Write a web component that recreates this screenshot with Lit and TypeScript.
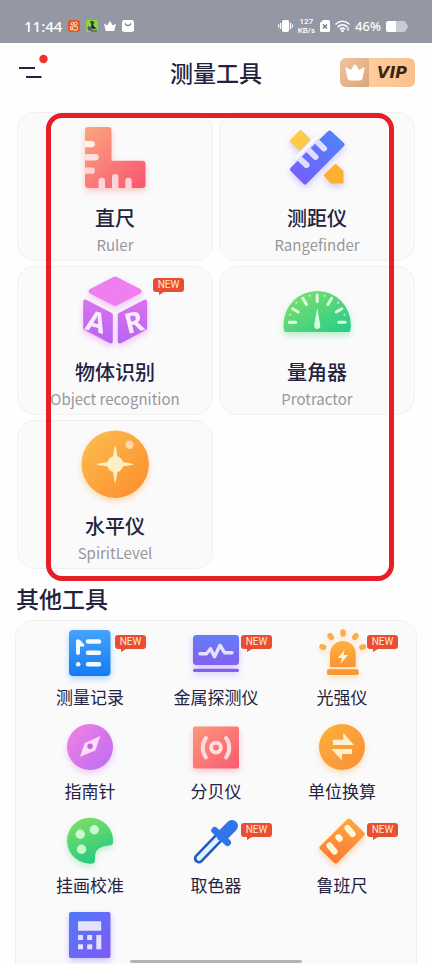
import { LitElement, html, svg, css, nothing, SVGTemplateResult } from "lit";
import { customElement, property } from "lit/decorators.js";

interface Tool {
  name: string;
  sub?: string;
  icon: string;
  isNew?: boolean;
  hideLabel?: boolean;
}

const mainTools: Tool[] = [
  { name: "直尺", sub: "Ruler", icon: "ruler" },
  { name: "测距仪", sub: "Rangefinder", icon: "range" },
  { name: "物体识别", sub: "Object recognition", icon: "ar", isNew: true },
  { name: "量角器", sub: "Protractor", icon: "protractor" },
  { name: "水平仪", sub: "SpiritLevel", icon: "spirit" },
];

const otherTools: Tool[] = [
  { name: "测量记录", icon: "records", isNew: true },
  { name: "金属探测仪", icon: "metal", isNew: true },
  { name: "光强仪", icon: "light", isNew: true },
  { name: "指南针", icon: "compass" },
  { name: "分贝仪", icon: "decibel" },
  { name: "单位换算", icon: "convert" },
  { name: "挂画校准", icon: "palette" },
  { name: "取色器", icon: "dropper", isNew: true },
  { name: "鲁班尺", icon: "luban", isNew: true },
  { name: "计算器", icon: "calculator", hideLabel: true },
];

const gradient = (from: string, to: string, x1 = 0, y1 = 0, x2 = 1, y2 = 1) => svg`
  <defs><linearGradient id="g" x1=${x1} y1=${y1} x2=${x2} y2=${y2}>
    <stop offset="0" stop-color=${from}/><stop offset="1" stop-color=${to}/>
  </linearGradient></defs>`;

const icons: Record<string, { size: number; glow: string; art: SVGTemplateResult }> = {
  ruler: {
    size: 68,
    glow: "#ff8a7a70",
    art: svg`${gradient("#fba57f", "#fa5570")}
      <path fill="url(#g)" d="M7 5H27.500a3 3 0 0 1 3 3V38.700H61.500a3 3 0 0 1 3 3V63a3 3 0 0 1-3 3H7a3 3 0 0 1-3-3V8a3 3 0 0 1 3-3z"/>
      <g fill="#ffd3dc">
        <path fill="#fff3ee" d="M4 19h6.800a3.100 3.100 0 0 1 0 6.200H4z"/>
        <path fill="#ffe0df" d="M4 32h10.500a3.200 3.200 0 0 1 0 6.400H4z"/>
        <path d="M4 45.600h6.800a3.100 3.100 0 0 1 0 6.200H4z"/>
        <path d="M17.600 66V59a3.200 3.200 0 0 1 6.400 0v7z"/>
        <path d="M31 66V55.300a3.200 3.200 0 0 1 6.400 0V66z"/>
        <path d="M44.300 66V59a3.200 3.200 0 0 1 6.400 0v7z"/>
      </g>`,
  },
  range: {
    size: 68,
    glow: "#8b7cff60",
    art: svg`${gradient("#7a5cfb", "#4a86f7", 0, 1, 1, 0)}
      <path fill="#fdcb45" stroke="#fdcb45" stroke-width="3" stroke-linejoin="round" d="M17.500 9.700 25.700 17.500 16.700 27.200 8.300 19z"/>
      <path fill="url(#g)" stroke="url(#g)" stroke-width="4" stroke-linejoin="round" d="M46.600 10.500 59.500 22.500 22 60.500 9 47.300z"/>
      <path fill="none" stroke="#e4dcff" stroke-width="6" stroke-linecap="round" d="M17 37l6.500 6M26 28.500l6.500 6.500M34.500 20l6.500 6.500"/>
      <path fill="#fafafb" d="M11 35.500 33.500 13l2.500 2.500L13.500 38z"/>
      <path fill="#fdb02e" stroke="#fdb02e" stroke-width="2" stroke-linejoin="round" d="M52.600 43 59.500 49.500V60.500H48.500L41.800 53.300z"/>`,
  },
  ar: {
    size: 68,
    glow: "#e878f070",
    art: svg`${gradient("#d872ee", "#b765f2", 0, 0, 0, 1)}
      <path fill="#ee7fee" stroke="#ee7fee" stroke-width="5" stroke-linejoin="round" d="M34.200 3 58 15.300 34.200 27.500 10.200 15.300z"/>
      <path fill="url(#g)" stroke="url(#g)" stroke-width="4" stroke-linejoin="round" d="M4.200 25.500 29.800 38.700V65.500L4.200 52z"/>
      <path fill="url(#g)" stroke="url(#g)" stroke-width="4" stroke-linejoin="round" d="M64.200 25.500 38.800 38.700V65.500L64.200 52z"/>
      <g class="cube" fill="#fdeafe" text-anchor="middle">
        <text x="0" y="10" transform="translate(15 46) rotate(14)">A</text>
        <text x="0" y="10" transform="translate(53 46) rotate(-14)">R</text>
      </g>`,
  },
  protractor: {
    size: 68,
    glow: "#6fe08a80",
    art: svg`${gradient("#86e06a", "#25cb8c")}
      <path fill="url(#g)" d="M2.200 56C1 56 .600 52 .600 48.600a33.600 33.600 0 0 1 67.200 0C67.800 52 67.400 56 66.200 56z"/>
      <g stroke="#d9ffdf" stroke-width="3" stroke-linecap="round">
        <path d="M34.200 19V25.500M6.200 46.200h6.500M55.700 46.200h6.500M9.600 32.700l5.600 3.300M58.800 32.700l-5.600 3.300M19.800 22.200l3.700 6.300M48.600 22.200l-3.700 6.300"/>
      </g>
      <g fill="#c9f7cf"><circle cx="26.900" cy="19.700" r="1"/><circle cx="41.500" cy="19.700" r="1"/><circle cx="13.300" cy="26.700" r="1"/><circle cx="55.100" cy="26.700" r="1"/><circle cx="6.900" cy="38.700" r="1"/><circle cx="61.500" cy="38.700" r="1"/></g>
      <path fill="#d9ffdf" d="M34.200 31.500 37.200 49a3.100 3.100 0 1 1-6 0z"/>`,
  },
  spirit: {
    size: 68,
    glow: "#ffb04a70",
    art: svg`${gradient("#fdc04f", "#fd8a2c")}
      <circle cx="34.200" cy="34.200" r="33.700" fill="url(#g)"/>
      <circle cx="34.200" cy="34.200" r="8.200" fill="#fff0c4"/>
      <path fill="#fff0c4" d="M34.200 15.500C35.500 18 36 24 37 31.400 44 32.400 50.500 33 53 34.200 50.500 35.400 44 36 37 37 36 44 35.500 50.500 34.200 53 33 50.500 32.400 44 31.400 37 24 36 18 35.400 15.500 34.200 18 33 24 32.400 31.400 31.400 32.400 24 33 18 34.200 15.500z"/>
      <circle cx="48.500" cy="14.700" r="4.200" fill="#ffd9a8"/>`,
  },
  records: {
    size: 46,
    glow: "#3d97ff60",
    art: svg`${gradient("#45a3fb", "#147cf4", 0, 0, 0, 1)}
      <rect x="2" y="0" width="41.500" height="46" rx="4" fill="url(#g)"/>
      <path stroke="#f3f9ff" stroke-width="4.500" stroke-linecap="round" d="M21 11.500h11M21 22.800h11M21 34.300h11"/>
      <path fill="#f3f9ff" d="M9 11.500c0-2.500 2.500-3 4-1.500l4.200 4.500v2h-4.200V23c0 2.600-4 2.600-4 0z"/>
      <circle cx="11.200" cy="34.300" r="2.300" fill="#f3f9ff"/>`,
  },
  metal: {
    size: 46,
    glow: "#8a70ff60",
    art: svg`${gradient("#627df8", "#8460ee", 0, 0, 0, 1)}
      <rect x="0" y="5" width="46" height="30" rx="3.500" fill="url(#g)"/>
      <rect x="0" y="38.700" width="46" height="3.300" rx="1.500" fill="#8160ea"/>
      <path fill="none" stroke="#e6e2ff" stroke-width="3.400" stroke-linecap="round" stroke-linejoin="round" d="M7 23.700h6.500l4-5 4 8 5.500-11.500 4.500 7.500H39"/>`,
  },
  light: {
    size: 46,
    glow: "#ffb04a60",
    art: svg`${gradient("#fcb242", "#fb9433", 0, 0, 0, 1)}
      <path fill="url(#g)" d="M11 37V23.800a12.900 12.900 0 0 1 25.800 0V37z"/>
      <rect x="8" y="39.300" width="31.700" height="5.700" rx="1.800" fill="#fb9733"/>
      <path stroke="#fbae43" stroke-width="5.400" stroke-linecap="round" d="M24 2v2M11 5.700l1.300 1.800M37 5.700l-1.300 1.800M3 16.800l1.600.600M44.500 16.800l-1.600.600"/>
      <path fill="#fff6dc" d="M25.500 20 19 28h4l-1.500 6 7.500-9h-4.300z"/>`,
  },
  compass: {
    size: 46,
    glow: "#dd7af060",
    art: svg`${gradient("#f083e2", "#bd6bf3")}
      <circle cx="23" cy="23" r="23" fill="url(#g)"/>
      <path fill="#fbdcf9" d="M33.300 12 28.400 26.400 13 32.800 17.800 19z"/><circle cx="23" cy="22.300" r="2.700" fill="#c565dc"/>`,
  },
  decibel: {
    size: 46,
    glow: "#ff7a7a60",
    art: svg`${gradient("#fc987a", "#fb5a72")}
      <rect x="0" y="2.500" width="46" height="42" rx="2" fill="url(#g)"/>
      <circle cx="23" cy="23.600" r="4.900" fill="none" stroke="#ffe1e1" stroke-width="3.800"/>
      <path fill="none" stroke="#ffd9dc" stroke-width="4" stroke-linecap="round" d="M13 14c-4.300 5.500-4.300 14 0 19.400M33 14c4.300 5.500 4.300 14 0 19.400"/>`,
  },
  convert: {
    size: 46,
    glow: "#ffb04a60",
    art: svg`${gradient("#fbb03d", "#fb8f34")}
      <circle cx="23" cy="23" r="23" fill="url(#g)"/>
      <path fill="#fff1cf" d="M14 15.700H24.300V9L35 21H14zM33 25H12.300L23 36.500V30H33z"/>`,
  },
  palette: {
    size: 46,
    glow: "#5fdc8060",
    art: svg`${gradient("#7ede66", "#22c880", 0.3, 0, 0.7, 1)}
      <path fill="url(#g)" d="M25.500 45.500A23 23 0 1 1 46 24.500c0 2-1.500 2.700-4 3C31 28.700 28 32 28 40.500c0 3-.300 4.700-2.500 5z"/>
      <g fill="#cbf8cf"><circle cx="13.300" cy="16.300" r="4.700"/><circle cx="27.300" cy="11.700" r="4.700"/><circle cx="14.500" cy="31.300" r="4.700"/></g>`,
  },
  dropper: {
    size: 46,
    glow: "#00000000",
    art: svg`
      <path stroke="#1f5bb8" stroke-width="10" stroke-linecap="round" d="M5.800 40.500 27 18.500"/>
      <path stroke="#e2efff" stroke-width="5" stroke-linecap="round" d="M6 40.300 26 19.500"/>
      <path stroke="#2f74e8" stroke-width="12" stroke-linecap="round" d="M29.500 17.500 39 8"/>
      <path stroke="#2f74e8" stroke-width="7" stroke-linecap="round" d="M21.800 12.500 34.500 24.500"/>`,
  },
  luban: {
    size: 46,
    glow: "#ff9a4a70",
    art: svg`${gradient("#fba63d", "#fb7a35", 0.6, 0, 0.5, 1)}
      <path fill="url(#g)" stroke="url(#g)" stroke-width="4" stroke-linejoin="round" d="M30 2.500 43.700 16 16.700 43.500 2.500 29.700z"/>
      <path stroke="#fff5d8" stroke-width="6.200" stroke-linecap="round" d="M10.500 27.500l5 6M19.500 19.200l1.200 1.400M28.500 10l5 6"/>`,
  },
  calculator: {
    size: 46,
    glow: "#7a6cff60",
    art: svg`${gradient("#4f7af8", "#8159f6")}
      <rect x="2" y="0" width="41.500" height="46" rx="2" fill="url(#g)"/>
      <g fill="#e3e3ff"><rect x="11" y="9.300" width="23.200" height="9.400" rx=".6"/><rect x="11" y="23" width="5" height="5"/><rect x="20.200" y="23" width="5" height="5"/><rect x="11" y="32.300" width="5" height="5"/><rect x="20.200" y="32.300" width="5" height="5"/><rect x="29.300" y="23" width="5" height="14.300"/></g>`,
  },
};

@customElement("tool-icon")
export class ToolIcon extends LitElement {
  @property() name = "";

  static styles = css`
    :host { display: block; }
    svg { display: block; overflow: visible; }
    .cube { font: 700 28px "Noto Sans", sans-serif; }
  `;

  render() {
    const icon = icons[this.name];
    return html`<svg aria-hidden="true" width=${icon.size} height=${icon.size}
      viewBox="0 0 ${icon.size} ${icon.size}" fill="none"
      style="filter: drop-shadow(0 3px 3px ${icon.glow})">${icon.art}</svg>`;
  }
}

@customElement("new-badge")
export class NewBadge extends LitElement {
  static styles = css`
    :host {
      display: block;
      width: 31px;
      height: 14px;
      border-radius: 3px;
      background: #e84e2f;
      color: #ffe9dc;
      font: 10px/14px Roboto, sans-serif;
      text-align: center;
    }
    :host::after {
      content: "";
      position: absolute;
      left: 6px;
      top: 100%;
      border-top: 3px solid #e84e2f;
      border-right: 5px solid transparent;
    }
  `;

  render() {
    return html`NEW`;
  }
}

@customElement("status-bar")
export class StatusBar extends LitElement {
  static styles = css`
    :host {
      display: flex;
      align-items: center;
      justify-content: space-between;
      flex: none;
      height: 43px;
      box-sizing: border-box;
      padding: 9px 24px 0;
      background: #9497a4;
      color: #fff;
      font-family: "Noto Sans", sans-serif;
    }
    .side { display: flex; align-items: center; gap: 6px; }
    .time { font-size: 15px; font-weight: 500; line-height: 20px; }
    .rate {
      display: grid;
      font: 500 8px/9px Roboto, sans-serif;
      text-align: center;
    }
    .level { font-size: 13px; font-weight: 500; line-height: 20px; }
    .right { gap: 5px; }
    svg { display: block; }
  `;

  render() {
    return html`
      <div class="side">
        <span class="time">11:44</span>
        <svg width="12" height="12" viewBox="0 0 12 12" fill="none" stroke="#ffe6da">
          <rect width="12" height="12" rx="2.500" fill="#e8561c" stroke="none"/>
          <circle cx="4.300" cy="3.800" r="1.400"/><circle cx="7.600" cy="3.600" r="1.600"/>
          <rect x="4.600" y="6.400" width="4.800" height="3.600" rx="1"/><path d="M4.600 7.600 2.500 6.800v3l2.100-.6"/>
        </svg>
        <svg width="12" height="12" viewBox="0 0 12 12">
          <rect width="12" height="12" rx="2" fill="#84d941"/>
          <path fill="#1d2a2e" d="M4 1.500 7 1l1.500 2L7 4.500 8.500 7 11 8.500 7 9 5 7.500 5.500 4z"/>
          <path fill="#7b3fa0" d="M2 6l3 1 1.500 3L3 11 1.500 8.500z"/><path fill="#d9402e" d="M6 2.500h2v1H6z"/>
          <path fill="#26352c" d="M5 10.500h6v1H5z"/>
        </svg>
        <svg width="12" height="12" viewBox="0 0 12 12" fill="#fff">
          <path d="M0 3.500 3.200 5.500 6 1l2.800 4.500L12 3.500 10.300 11H1.700z"/>
        </svg>
        <svg width="12" height="12" viewBox="0 0 12 12">
          <rect width="12" height="12" rx="2.500" fill="#fff"/>
          <path fill="none" stroke="#70737e" stroke-width="1.200" stroke-linecap="round" d="M3.300 3.800c1 2.300 4.400 2.300 5.400 0"/>
        </svg>
      </div>
      <div class="side right">
        <svg width="15" height="14" viewBox="0 0 15 14" fill="#fff">
          <rect x="4" y="1" width="7" height="12" rx="1.800"/>
          <path d="M1.800 4h1.400v6H1.800zM11.800 4h1.400v6h-1.400zM0 5.500h1v3H0zM14 5.500h1v3h-1z"/>
        </svg>
        <span class="rate"><span>127</span><span>KB/s</span></span>
        <svg width="10" height="12" viewBox="0 0 10 12">
          <path fill="#fff" d="M3 0h5.500A1.500 1.500 0 0 1 10 1.500v9A1.500 1.500 0 0 1 8.500 12h-7A1.500 1.500 0 0 1 0 10.500V3z"/>
          <path stroke="#6e717c" stroke-width="1.200" d="M3 4.500l4 4M7 4.500l-4 4"/>
        </svg>
        <svg width="15" height="12" viewBox="0 0 15 12" fill="none" stroke="#fff" stroke-width="1.600" stroke-linecap="round">
          <path d="M1 4c3.800-3.600 9.200-3.600 13 0M3.200 6.600c2.500-2.300 6.100-2.300 8.600 0M5.400 9c1.300-1.100 2.900-1.100 4.200 0"/>
          <circle cx="7.500" cy="10.800" r=".6" fill="#fff"/><path stroke-width="1.200" d="M13 7.500v3"/>
        </svg>
        <span class="level">46%</span>
        <svg width="22" height="11" viewBox="0 0 22 11">
          <rect width="20" height="11" rx="2.500" fill="#c9cbd2"/>
          <path fill="#fff" d="M2.500 0H10v11H2.500A2.500 2.500 0 0 1 0 8.500v-6A2.500 2.500 0 0 1 2.500 0z"/>
          <path fill="#c9cbd2" d="M20 2.500c2.300 1 2.300 5 0 6z"/>
        </svg>
      </div>
    `;
  }
}

@customElement("app-root")
export class AppRoot extends LitElement {
  static styles = css`
    :host {
      display: flex;
      flex-direction: column;
      position: relative;
      height: 100vh;
      overflow: hidden;
      background: #fefefe;
      color: #23233f;
      font-family: "Noto Sans CJK SC", sans-serif;
    }
    button {
      appearance: none;
      margin: 0;
      border: 0;
      padding: 0;
      background: none;
      color: inherit;
      font: inherit;
      cursor: pointer;
    }
    .top {
      display: grid;
      grid-template-columns: 1fr auto 1fr;
      align-items: center;
      flex: none;
      height: 58px;
      padding: 0 17px;
    }
    .top h1, .heading {
      margin: 0;
      font-size: 23px;
      font-weight: 500;
      line-height: 32px;
    }
    .menu { justify-self: start; padding-left: 2px; }
    .menu svg { display: block; overflow: visible; }
    .vip {
      justify-self: end;
      display: flex;
      align-items: center;
      width: 75px;
      height: 29px;
      overflow: hidden;
      border-radius: 6px;
      background: linear-gradient(90deg, #fdd6ab, #fbc08b);
      color: #3a2413;
      font: italic 700 16px/29px "DejaVu Sans", sans-serif;
    }
    .crown {
      display: grid;
      place-items: center;
      width: 29px;
      height: 29px;
      margin-right: 8px;
      background: linear-gradient(135deg, #f3c59a, #dba67c);
    }
    .content {
      flex: 1;
      min-height: 0;
      overflow-y: auto;
      scrollbar-width: none;
      padding-top: 11px;
    }
    .cards {
      position: relative;
      display: grid;
      grid-template-columns: 1fr 1fr;
      gap: 5px 6px;
      padding: 0 17px;
    }
    .card {
      display: flex;
      flex-direction: column;
      align-items: center;
      box-sizing: border-box;
      height: 149px;
      padding-top: 9px;
      border: 1px solid #f1f1f2;
      border-radius: 18px;
      background: #fafafb;
    }
    .art { position: relative; }
    .badge { position: absolute; left: 48px; top: 5px; }
    .card .badge { left: 72px; top: 2px; }
    .title {
      margin-top: 14px;
      font-size: 20px;
      font-weight: 500;
      line-height: 28px;
    }
    .sub {
      color: #97979c;
      font-size: 15px;
      line-height: 26px;
      white-space: nowrap;
    }
    .mark {
      position: absolute;
      inset: 1px 38px -12px 46px;
      border: 5px solid #e61f26;
      border-radius: 16px;
      pointer-events: none;
    }
    .heading { padding: 13px 16px 6px; }
    .panel {
      display: grid;
      grid-template-columns: repeat(3, 1fr);
      row-gap: 14px;
      margin: 0 15px;
      padding: 9px 11px 24px;
      border: 1px solid #f0f0f1;
      border-radius: 18px;
      background: #fafafb;
    }
    .tool {
      display: flex;
      flex-direction: column;
      align-items: center;
      min-height: 80px;
    }
    .label {
      margin-top: 8px;
      font-size: 17px;
      line-height: 26px;
      white-space: nowrap;
    }
    .home {
      position: absolute;
      left: 30%;
      right: 30%;
      bottom: 1px;
      height: 3px;
      border-radius: 2px;
      background: #b4b4b5;
    }
  `;

  private art(tool: Tool) {
    return html`<span class="art">
      <tool-icon name=${tool.icon}></tool-icon>
      ${tool.isNew ? html`<new-badge class="badge"></new-badge>` : nothing}
    </span>`;
  }

  render() {
    return html`
      <status-bar></status-bar>
      <header class="top">
        <button class="menu" aria-label="菜单">
          <svg width="30" height="32" viewBox="0 0 30 32">
            <path stroke="#23233f" stroke-width="2" d="M0 12h16M7 21h15.500"/>
            <circle cx="24.500" cy="3" r="4.200" fill="#f5302c"/>
          </svg>
        </button>
        <h1>测量工具</h1>
        <button class="vip">
          <span class="crown">
            <svg width="20" height="17" viewBox="0 0 20 17" fill="#fff">
              <path d="M.500 4.500Q0 3 1.700 3.500L6 6 8.800 1.200Q10 0 11.200 1.200L14 6 18.300 3.500Q20 3 19.500 4.500L17.500 14.500Q17 16.500 15 16.500H5Q3 16.500 2.500 14.500z"/>
            </svg>
          </span>VIP
        </button>
      </header>
      <main class="content">
        <section class="cards">
          ${mainTools.map((tool) => html`
            <button class="card">
              ${this.art(tool)}
              <span class="title">${tool.name}</span>
              <span class="sub">${tool.sub}</span>
            </button>`)}
          <div class="mark"></div>
        </section>
        <h2 class="heading">其他工具</h2>
        <section class="panel">
          ${otherTools.map((tool) => html`
            <button class="tool" aria-label=${tool.name}>
              ${this.art(tool)}
              ${tool.hideLabel ? nothing : html`<span class="label">${tool.name}</span>`}
            </button>`)}
        </section>
      </main>
      <div class="home"></div>
    `;
  }
}
